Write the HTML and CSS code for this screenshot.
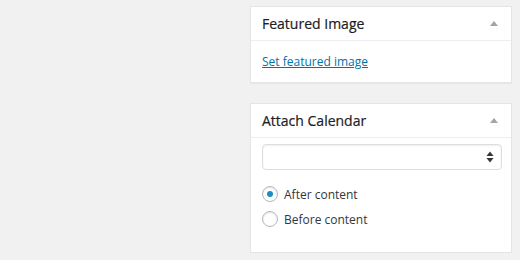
FILE: index.html
```html
<!DOCTYPE html>
<html lang="en">
<head>
  <meta charset="UTF-8">
  <title>Post sidebar</title>
  <link rel="stylesheet" href="styles.css">
</head>
<body>

  <div class="sidebar">

    <!-- Featured image box -->
    <div class="postbox">
      <div class="postbox-header">
        <h2>Featured Image</h2>
        <span class="toggle-arrow"></span>
      </div>
      <div class="inside">
        <a href="#" class="set-image">Set featured image</a>
      </div>
    </div>

    <!-- Calendar box -->
    <div class="postbox">
      <div class="postbox-header">
        <h2>Attach Calendar</h2>
        <span class="toggle-arrow"></span>
      </div>
      <div class="inside calendar">
        <div class="select-box">
          <svg class="select-arrows" width="8" height="12" viewBox="0 0 8 12">
            <path d="M4 0.5 L7.5 5 L0.5 5 Z" fill="#32373c"/>
            <path d="M4 11.5 L7.5 7 L0.5 7 Z" fill="#32373c"/>
          </svg>
        </div>
        <div class="radio-list">
          <label class="radio-row"><span class="radio checked"></span>After content</label>
          <label class="radio-row"><span class="radio"></span>Before content</label>
        </div>
      </div>
    </div>

  </div>

</body>
</html>
```

FILE: styles.css
```css
body {
  margin: 0;
  background-color: #f1f1f1;
  font-family: 'Open Sans', sans-serif;
  color: #23282d;
  display: flex;
  justify-content: flex-end;
}

.sidebar {
  width: 262px;
  margin: 6px 8px 0 0;
  display: flex;
  flex-direction: column;
  gap: 20px;
}

.postbox {
  background-color: #fff;
  border: 1px solid #e5e5e5;
  box-shadow: 0 1px 1px rgba(0, 0, 0, 0.04);
}

.postbox-header {
  display: flex;
  align-items: center;
  justify-content: space-between;
  height: 33px;
  padding: 0 13px 0 11px;
  border-bottom: 1px solid #eee;
}

.postbox-header h2 {
  margin: 0;
  font-size: 14px;
  font-weight: 400;
  color: #1d2024;
  -webkit-text-stroke: 0.2px #1d2024;
}

.toggle-arrow {
  width: 0;
  height: 0;
  border-left: 4px solid transparent;
  border-right: 4px solid transparent;
  border-bottom: 5px solid #a0a5aa;
}

.inside {
  padding: 11px 11px 11px;
  font-size: 12px;
}

.set-image {
  color: #0073aa;
  line-height: 19px;
}

.inside.calendar {
  padding: 6px 9px 24px 11px;
}

.select-box {
  height: 24px;
  border: 1px solid #ddd;
  border-radius: 4px;
  box-shadow: inset 0 1px 2px rgba(0, 0, 0, 0.07);
  display: flex;
  align-items: center;
  justify-content: flex-end;
  padding-right: 7px;
}

.radio-list {
  display: flex;
  flex-direction: column;
  gap: 7px;
  margin-top: 15px;
}

.radio-row {
  display: flex;
  align-items: center;
  gap: 6px;
  height: 18px;
  color: #32373c;
}

.radio {
  width: 16px;
  height: 16px;
  box-sizing: border-box;
  border: 1px solid #b4b9be;
  border-radius: 50%;
  box-shadow: inset 0 1px 2px rgba(0, 0, 0, 0.1);
  display: flex;
  align-items: center;
  justify-content: center;
}

.radio.checked::after {
  content: "";
  width: 6px;
  height: 6px;
  border-radius: 50%;
  background-color: #1e8cbe;
}
```
